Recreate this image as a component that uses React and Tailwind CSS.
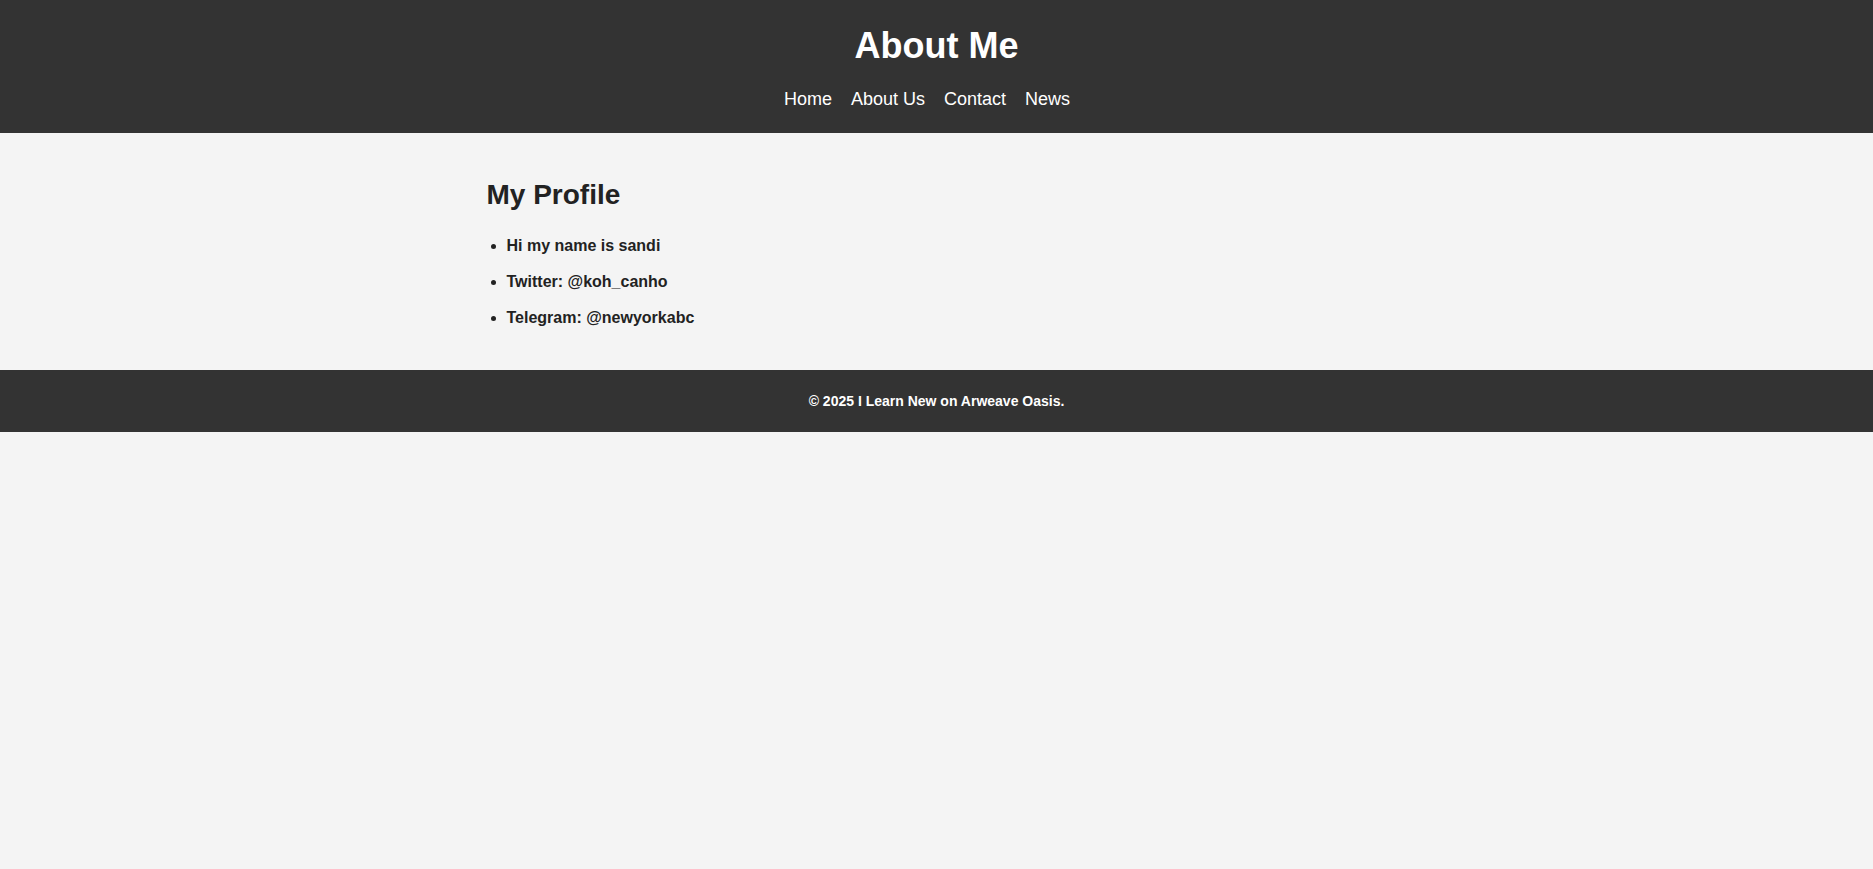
import React from 'react';

const links = ['Home', 'About Us', 'Contact', 'News'];

const profile = [
  'Hi my name is sandi',
  'Twitter: @koh_canho',
  'Telegram: @newyorkabc',
];

const App = () => {
  return (
    <div className="min-h-screen bg-[#f4f4f4] text-[#333] font-['Liberation_Sans',Arial,sans-serif]">
      {/* Header */}
      <header className="bg-[#333] text-white text-center pt-[25px] pb-[23px]">
        <h1 className="text-[36px] font-bold leading-[41px]">About Me</h1>
        <nav className="mt-[23px]">
          <ul className="flex justify-center">
            {links.map((link) => (
              <li key={link} className="mr-[19px] text-[18px] leading-[21px]">
                <a href="#" className="text-white">{link}</a>
              </li>
            ))}
          </ul>
        </nav>
      </header>

      {/* Main */}
      <main className="max-w-[900px] mx-auto pt-[46px] pb-[34px]">
        <h2 className="text-[28px] font-bold leading-[32px] text-[#222]">My Profile</h2>
        <ul className="list-disc pl-[20px] mt-[17px]">
          {profile.map((item) => (
            <li key={item} className="text-[16px] font-bold leading-[18px] py-[9px] text-[#222]">
              {item}
            </li>
          ))}
        </ul>
      </main>

      {/* Footer */}
      <footer className="bg-[#333] text-white text-center text-[14px] font-bold leading-[16px] pt-[23px] pb-[23px]">
        © 2025 I Learn New on Arweave Oasis.
      </footer>
    </div>
  );
};

export default App;
